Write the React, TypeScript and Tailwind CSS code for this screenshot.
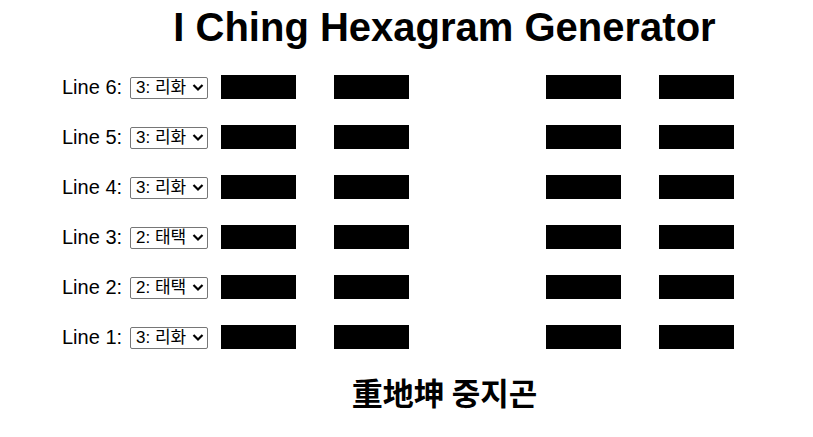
import React, { useState } from 'react';

const options = ['0: 곤지', '1: 진뢰', '2: 태택', '3: 리화', '4: 손풍', '5: 감수', '6: 간산', '7: 건천'];

const initial = [3, 3, 3, 2, 2, 3];

const font = '"Liberation Sans", Arial, "Noto Sans CJK KR", sans-serif';

const App: React.FC = () => {
  const [lines, setLines] = useState<number[]>(initial);

  const setLine = (i: number, v: number) => {
    const next = [...lines];
    next[i] = v;
    setLines(next);
  };

  return (
    <div className="w-[813px] h-[437px] bg-white text-black" style={{ fontFamily: font }}>
      <h1 className="pl-[76px] pt-[4px] text-center text-[40px] leading-[46px] font-bold">I Ching Hexagram Generator</h1>

      <div className="pl-[62px] pt-[25px] flex flex-col gap-[26px]">
        {lines.map((v, i) => (
          <div key={i} className="flex items-center h-[24px]">
            <span className="text-[20px] w-[68px] whitespace-nowrap">Line {6 - i}:</span>
            <div className="relative mt-[2px]">
              <select
                value={v}
                onChange={e => setLine(i, Number(e.target.value))}
                className="appearance-none w-[78px] h-[22px] border border-[#767676] rounded-[2px] bg-white text-[17px] leading-[20px] pl-[5px] pr-[16px] outline-none"
                style={{ fontFamily: font }}
              >
                {options.map((o, k) => (
                  <option key={k} value={k}>{o}</option>
                ))}
              </select>
              <svg className="absolute right-[4px] top-[7px] pointer-events-none" width="12" height="9" viewBox="0 0 12 9">
                <path d="M1.5 2 L6 6.5 L10.5 2" fill="none" stroke="#000" strokeWidth="2.2" />
              </svg>
            </div>
            <div className="ml-[13px] w-[75px] h-[24px] bg-black" />
            <div className="ml-[38px] w-[75px] h-[24px] bg-black" />
            <div className="ml-[137px] w-[75px] h-[24px] bg-black" />
            <div className="ml-[38px] w-[75px] h-[24px] bg-black" />
          </div>
        ))}
      </div>

      <div className="pl-[76px] pt-[20px] text-center text-[31px] font-bold" style={{ fontFamily: '"Noto Sans CJK KR", "Noto Sans CJK SC", sans-serif' }}>
        重地坤 중지곤
      </div>
    </div>
  );
};

export default App;
